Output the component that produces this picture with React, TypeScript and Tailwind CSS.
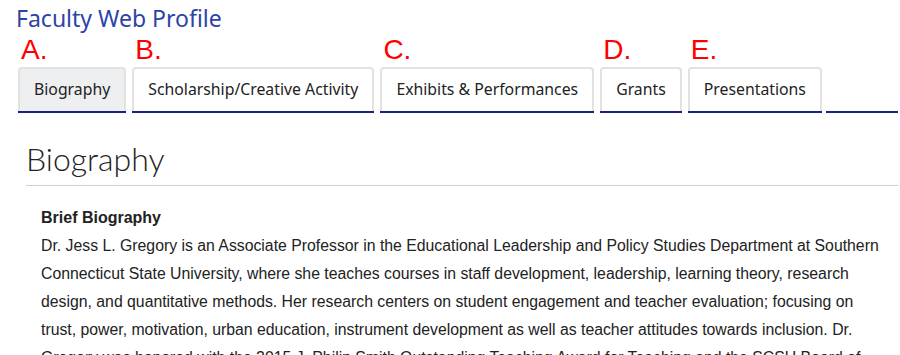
const tabs = [
  { letter: "A.", label: "Biography", active: true },
  { letter: "B.", label: "Scholarship/Creative Activity" },
  { letter: "C.", label: "Exhibits & Performances" },
  { letter: "D.", label: "Grants" },
  { letter: "E.", label: "Presentations" },
];

export default function App() {
  return (
    <div className="w-[900px] h-[355px] overflow-hidden bg-white">
      <h1 className="pl-4 pt-[3px] text-[23px] leading-[30px] text-[#2c44a8] font-['Noto_Sans',sans-serif]">
        Faculty Web Profile
      </h1>

      {/* tabs row */}
      <div className="flex items-end pl-[18px] gap-[6px]">
        {tabs.map((t) => (
          <div key={t.label} className="flex flex-col">
            <span className="pl-[3px] text-[28px] leading-[34px] text-[#ff0000] font-['Liberation_Sans',sans-serif]">
              {t.letter}
            </span>
            <div
              className={
                "h-[44px] px-[14px] flex items-center rounded-t-[4px] border-2 border-b-0 border-[#e2e2e2] text-[15.8px] text-[#222] font-['Noto_Sans',sans-serif] " +
                (t.active ? "bg-[#eeeff1]" : "bg-white")
              }
            >
              {t.label}
            </div>
            <div className="h-[2px] bg-[#1a237e]" />
          </div>
        ))}
        <div className="flex-1 ml-[-2px] h-[2px] bg-[#1a237e] mr-[2px]" />
      </div>

      <div className="pl-[26px] pr-[2px]">
        <h2 className="pt-[26px] pb-[6px] text-[32px] leading-[40px] font-light text-[#222] font-['Lato',sans-serif] border-b border-[#cfcfcf]">
          Biography
        </h2>
        <div className="pl-[15px] pt-[18px] pr-[8px] font-['Liberation_Sans',sans-serif] text-[#222]">
          <p className="text-[16px] font-bold leading-[28px]">Brief Biography</p>
          <p className="text-[15.8px] leading-[28px]">
            Dr. Jess L. Gregory is an Associate Professor in the Educational Leadership and Policy Studies
            Department at Southern Connecticut State University, where she teaches courses in staff development,
            leadership, learning theory, research design, and quantitative methods. Her research centers on student
            engagement and teacher evaluation; focusing on trust, power, motivation, urban education, instrument
            development as well as teacher attitudes towards inclusion. Dr. Gregory was honored with the 2015 J.
            Philip Smith Outstanding Teaching Award for Teaching and the SCSU Board of Regents Teaching Award.
          </p>
        </div>
      </div>
    </div>
  );
}
